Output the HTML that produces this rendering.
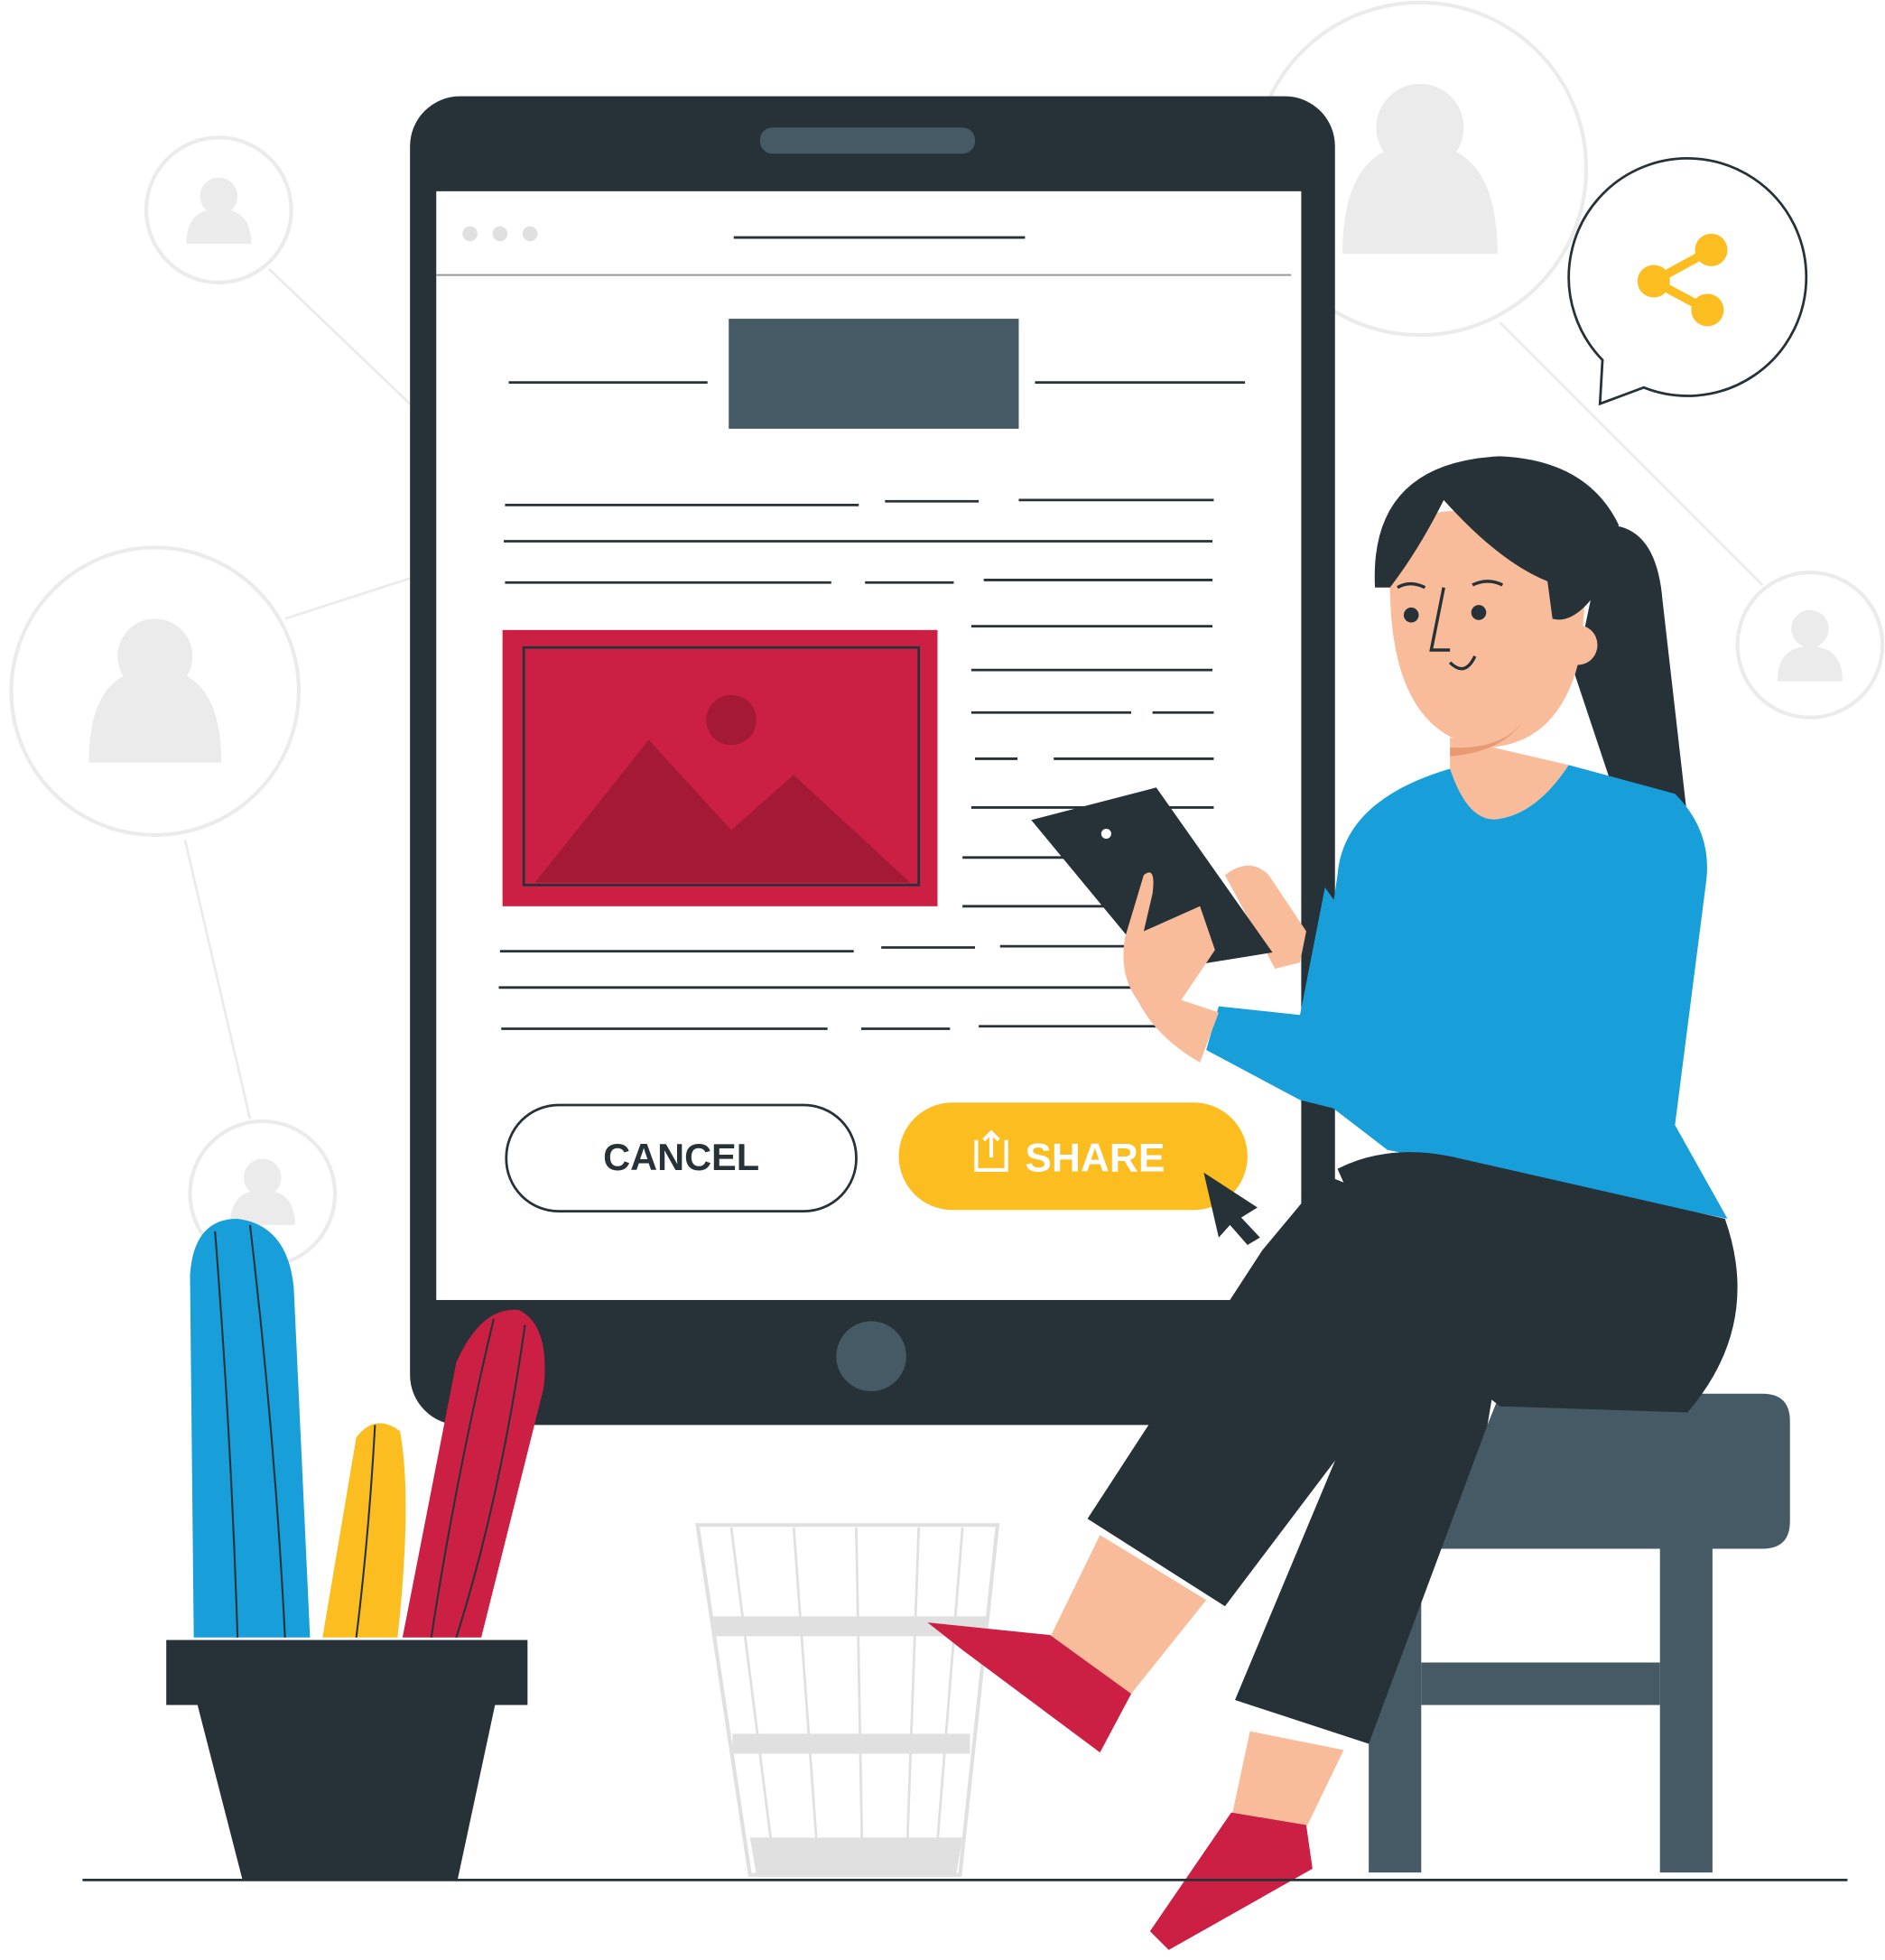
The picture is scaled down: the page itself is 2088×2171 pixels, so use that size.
<!DOCTYPE html><html><head><style>html,body{margin:0;padding:0;background:#fff}svg{display:block}</style></head><body>
<svg width="2088" height="2171" viewBox="0 0 1508 1568" xmlns="http://www.w3.org/2000/svg">
<g stroke="#ebebeb" stroke-width="2" fill="none">
<line x1="215" y1="215" x2="330" y2="325"/><line x1="228" y1="495" x2="330" y2="462"/><line x1="148" y1="672" x2="200" y2="895"/><line x1="1200" y1="258" x2="1410" y2="468"/>
<circle cx="175" cy="168" r="58" stroke-width="3"/><circle cx="124" cy="553" r="115" stroke-width="3"/><circle cx="210" cy="955" r="58" stroke-width="3"/><circle cx="1136" cy="135" r="133" stroke-width="3"/><circle cx="1448" cy="516" r="58" stroke-width="3"/>
</g>
<g fill="#ebebeb">
<circle cx="175" cy="157" r="15"/><path d="M149 195q0-28 26-28t26 28z"/>
<circle cx="124" cy="525" r="30"/><path d="M71 610q0-75 53-75t53 75z"/>
<circle cx="210" cy="942" r="15"/><path d="M184 980q0-28 26-28t26 28z"/>
<circle cx="1136" cy="102" r="35"/><path d="M1074 203q0-88 62-88t62 88z"/>
<circle cx="1448" cy="503" r="15"/><path d="M1422 545q0-28 26-28t26 28z"/>
</g>
<path d="M1282 288A95 95 0 1 1 1315 310L1280 323Z" fill="#fff" stroke="#263238" stroke-width="2"/>
<g fill="#fbbd1f"><circle cx="1369" cy="200" r="13"/><circle cx="1323" cy="225" r="13"/><circle cx="1366" cy="248" r="13"/></g>
<path d="M1369 200L1323 225L1366 248" stroke="#fbbd1f" stroke-width="7" fill="none"/>
<rect x="328" y="77" width="740" height="1063" rx="40" fill="#263238"/>
<rect x="349" y="153" width="692" height="887" fill="#fff"/>
<rect x="608" y="102" width="172" height="21" rx="10" fill="#455a64"/>
<circle cx="697" cy="1085" r="28" fill="#455a64"/>
<g fill="#e0e0e0"><circle cx="376" cy="187" r="6"/><circle cx="400" cy="187" r="6"/><circle cx="424" cy="187" r="6"/></g>
<g stroke="#263238" stroke-width="2"><line x1="587" y1="190" x2="820" y2="190"/><line x1="349" y1="220" x2="1033" y2="220" stroke="#999" stroke-width="1.5"/>
<line x1="407" y1="306" x2="566" y2="306"/><line x1="828" y1="306" x2="996" y2="306"/>
<line x1="404" y1="404" x2="687" y2="404"/><line x1="708" y1="401" x2="783" y2="401"/><line x1="815" y1="400" x2="971" y2="400"/>
<line x1="403" y1="433" x2="970" y2="433"/><line x1="404" y1="466" x2="665" y2="466"/><line x1="692" y1="466" x2="763" y2="466"/><line x1="787" y1="464" x2="970" y2="464"/>
<line x1="777" y1="501" x2="970" y2="501"/><line x1="777" y1="536" x2="970" y2="536"/><line x1="777" y1="570" x2="905" y2="570"/><line x1="922" y1="570" x2="971" y2="570"/>
<line x1="780" y1="607" x2="814" y2="607"/><line x1="843" y1="607" x2="971" y2="607"/><line x1="777" y1="646" x2="971" y2="646"/><line x1="770" y1="686" x2="880" y2="686"/><line x1="770" y1="725" x2="900" y2="725"/>
<line x1="400" y1="761" x2="683" y2="761"/><line x1="705" y1="758" x2="780" y2="758"/><line x1="800" y1="757" x2="900" y2="757"/>
<line x1="399" y1="790" x2="930" y2="790"/><line x1="401" y1="823" x2="662" y2="823"/><line x1="689" y1="823" x2="760" y2="823"/><line x1="783" y1="821" x2="930" y2="821"/></g>
<rect x="583" y="255" width="232" height="88" fill="#455a64"/>
<rect x="402" y="504" width="348" height="221" fill="#cb2043"/>
<rect x="419" y="518" width="316" height="190" fill="none" stroke="#263238" stroke-width="2"/>
<path d="M428 706L519 592L585 664L635 620L728 706Z" fill="#a31936"/>
<circle cx="585" cy="576" r="20" fill="#a31936"/>
<rect x="405" y="884" width="280" height="85" rx="42" fill="#fff" stroke="#263238" stroke-width="2"/>
<text x="545" y="936" font-family="Liberation Sans,sans-serif" font-weight="bold" font-size="30" fill="#263238" text-anchor="middle">CANCEL</text>
<rect x="719" y="882" width="279" height="86" rx="43" fill="#fbbd1f"/>
<path d="M781 912v24h24v-24M793 906v20M787 912l6-6 6 6" stroke="#fff" stroke-width="3" fill="none"/>
<text x="820" y="937" font-family="Liberation Sans,sans-serif" font-weight="bold" font-size="32" fill="#fff">SHARE</text>
<path d="M963 938L1006 966L993 974L1008 990L998 996L984 980L975 990Z" fill="#263238"/>
<!-- stool -->
<path d="M1200 1115h210q22 0 22 22v80q0 22-22 22h-260z" fill="#455a64"/>
<rect x="1095" y="1220" width="42" height="278" fill="#455a64"/><rect x="1328" y="1220" width="42" height="278" fill="#455a64"/>
<rect x="1137" y="1330" width="191" height="34" fill="#455a64"/>
<!-- bin -->
<path d="M558 1220h240l-30 280h-168z" fill="none" stroke="#e0e0e0" stroke-width="3"/>
<g stroke="#e0e0e0" stroke-width="2"><line x1="585" y1="1222" x2="620" y2="1498"/><line x1="635" y1="1222" x2="655" y2="1498"/><line x1="685" y1="1222" x2="690" y2="1498"/><line x1="735" y1="1222" x2="725" y2="1498"/><line x1="770" y1="1222" x2="748" y2="1498"/></g>
<rect x="570" y="1293" width="220" height="16" fill="#e0e0e0"/><rect x="586" y="1387" width="190" height="16" fill="#e0e0e0"/>
<path d="M600 1470h170l-5 30h-160z" fill="#e0e0e0"/>
<!-- woman -->
<path d="M1285 420Q1325 420 1330 480L1350 655L1290 630L1260 540Z" fill="#263238"/>
<path d="M1160 590L1160 625Q1175 660 1200 655Q1230 650 1255 612Z" fill="#f9bc9b"/>
<path d="M1070 700Q1075 640 1160 615Q1175 660 1200 655Q1230 650 1255 612L1340 635Q1370 665 1365 705L1340 900L1382 975L1110 920L1045 870Z" fill="#189fd9"/>
<path d="M1060 710L1110 780L1100 895L1040 880L965 840L975 805L1040 812Z" fill="#189fd9"/>
<path d="M1112 460Q1110 590 1190 598Q1250 595 1265 520L1270 450Q1220 400 1150 410Z" fill="#f9bc9b"/>
<path d="M1160 598Q1200 600 1218 578Q1200 602 1160 605Z" fill="#e89a73"/>
<circle cx="1262" cy="516" r="16" fill="#f9bc9b"/>
<path d="M1100 470Q1095 370 1200 365Q1270 368 1295 420L1280 470Q1260 500 1242 495L1238 465Q1200 450 1155 400Q1135 440 1112 470Z" fill="#263238"/>
<circle cx="1129" cy="492" r="6" fill="#263238"/><circle cx="1183" cy="490" r="6" fill="#263238"/>
<path d="M1155 470L1145 520L1160 520M1118 470q10-6 22 0M1178 468q12-6 24 0" stroke="#263238" stroke-width="2.5" fill="none"/>
<path d="M1160 530q12 12 20-5" stroke="#263238" stroke-width="2.5" fill="none"/>
<path d="M980 700Q1000 685 1015 700L1045 745L1040 770L1020 775Z" fill="#f9bc9b"/>
<path d="M825 656L925 630L1018 762L925 777Z" fill="#263238"/>
<circle cx="885" cy="667" r="4" fill="#fff"/>
<path d="M915 700Q925 692 922 715L915 745L960 725L972 760L945 800L975 810L960 850Q925 830 910 800Q895 780 900 750Z" fill="#f9bc9b"/>
<!-- pants -->
<path d="M1070 935Q1110 915 1160 925L1380 975Q1410 1060 1350 1130L1200 1125L1130 1070Z" fill="#263238"/>
<path d="M1060 940L1160 980L1150 1060L980 1285L870 1215L1010 1000Z" fill="#263238"/>
<path d="M1130 1060L1195 1110L1190 1140L1095 1395L988 1360L1080 1140Z" fill="#263238"/>
<path d="M880 1228L965 1280L905 1355L840 1310Z" fill="#f9bc9b"/>
<path d="M742 1298L840 1308L905 1355L880 1402L770 1320Z" fill="#cb2043"/>
<path d="M1000 1385L1075 1400L1045 1462L985 1455Z" fill="#f9bc9b"/>
<path d="M985 1450L1045 1460L1050 1495L935 1560L920 1545Z" fill="#cb2043"/>
<!-- cacti -->
<path d="M155 1310L152 1020Q155 975 190 975Q230 980 235 1030L248 1310Z" fill="#189fd9"/>
<path d="M258 1310L285 1150Q300 1130 320 1145Q330 1200 318 1310Z" fill="#fbbd1f"/>
<path d="M322 1310L365 1090Q385 1045 415 1048Q440 1060 435 1110L385 1310Z" fill="#cb2043"/>
<g stroke="#263238" stroke-width="1.5" fill="none"><path d="M172 985Q185 1150 190 1310M200 980Q220 1150 228 1310M300 1140Q295 1230 285 1310M395 1055Q365 1180 345 1310M420 1060Q400 1200 365 1310"/></g>
<rect x="133" y="1312" width="289" height="52" fill="#263238"/>
<path d="M158 1364h238l-30 140h-172z" fill="#263238"/>
<line x1="66" y1="1504" x2="1478" y2="1504" stroke="#263238" stroke-width="2"/>
</svg></body></html>
